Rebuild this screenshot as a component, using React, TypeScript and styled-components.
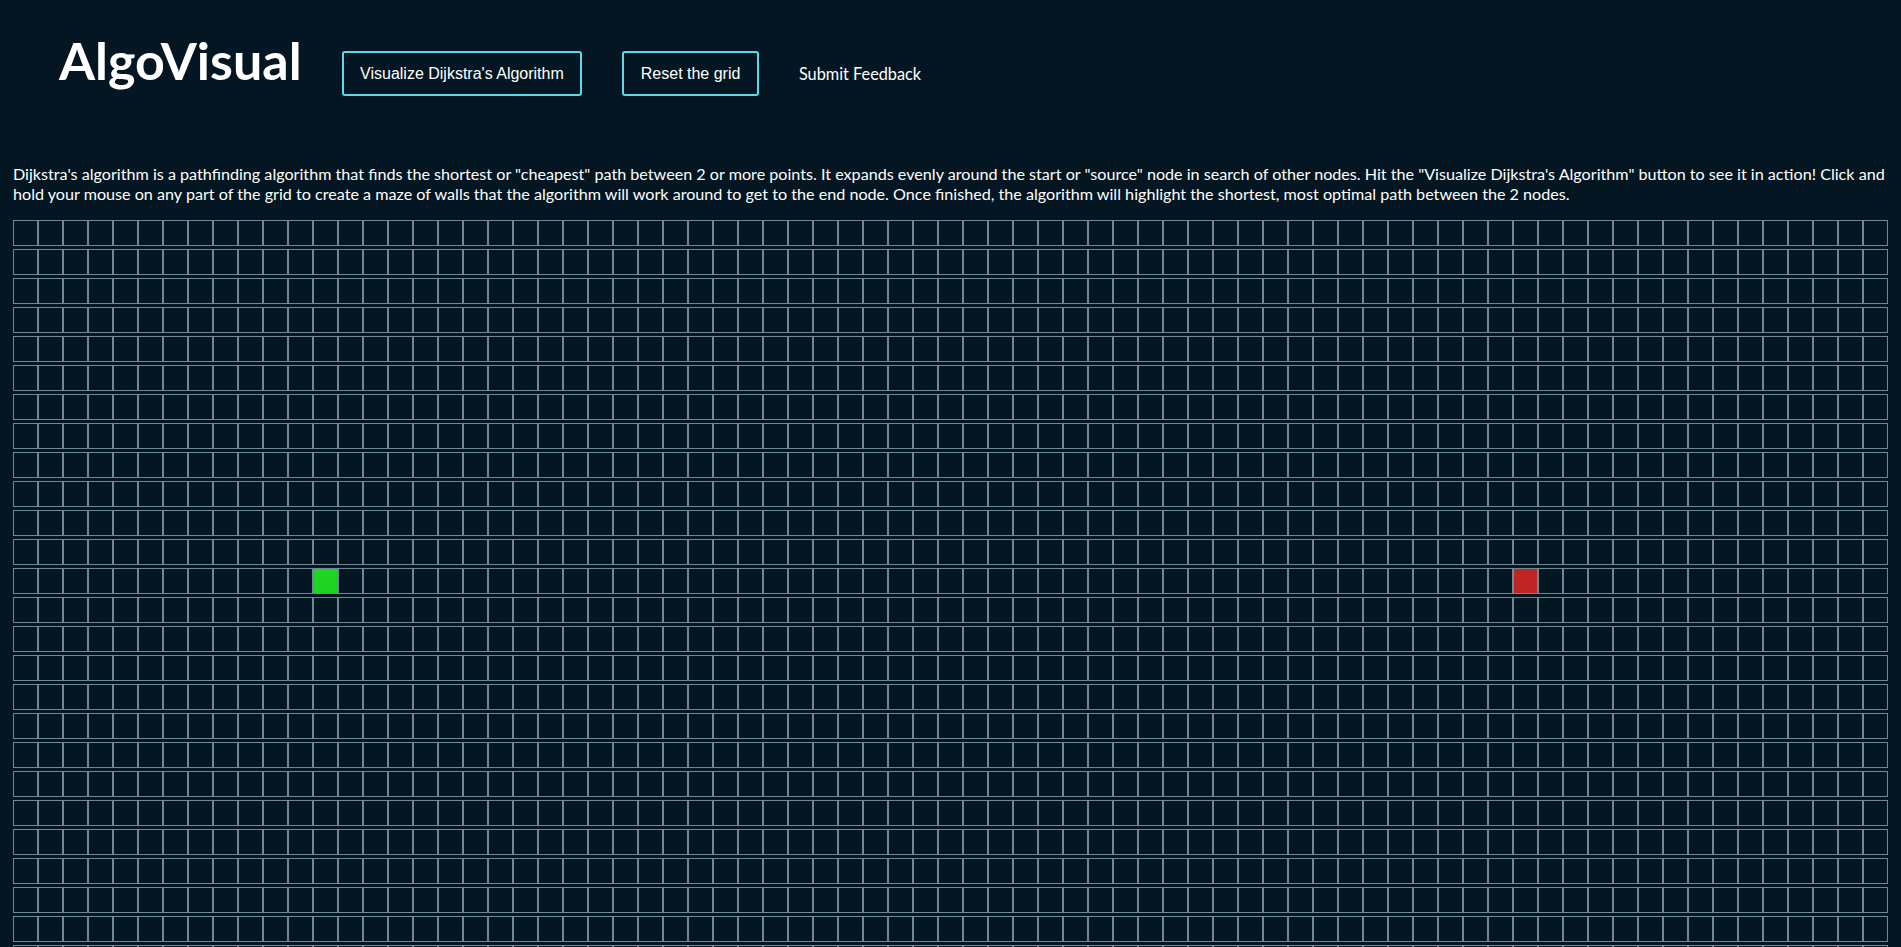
import React from "react";
import styled, { createGlobalStyle } from "styled-components";

const GlobalStyle = createGlobalStyle`
  html, body {
    margin: 0;
    padding: 0;
    background: #031621;
    overflow: hidden;
  }
  body {
    font-family: "Lato", "Open Sans", sans-serif;
    color: #ffffff;
  }
`;

const Page = styled.div`
  min-height: 947px;
  background: #031621;
`;

const Header = styled.header`
  display: flex;
  align-items: flex-start;
  padding-left: 59px;
  height: 164px;
`;

const Title = styled.h1`
  margin: 30px 0 0 0;
  font-family: "Lato", sans-serif;
  font-weight: 700;
  font-size: 52px;
  line-height: 60px;
  color: #ffffff;
`;

const Nav = styled.nav`
  display: flex;
  align-items: center;
  margin: 51px 0 0 40px;
  height: 45px;
  gap: 40px;
`;

const Button = styled.button`
  height: 45px;
  box-sizing: border-box;
  padding: 0 16.5px;
  background: transparent;
  border: 2px solid #5fd9e3;
  border-radius: 3px;
  color: #ffffff;
  font-family: "Liberation Sans", Arial, sans-serif;
  font-size: 16px;
  cursor: pointer;
`;

const Link = styled.a`
  color: #ffffff;
  font-family: "Lato", sans-serif;
  font-size: 16.3px;
  text-decoration: none;
`;

const Description = styled.p`
  margin: 0 8px 16px 13px;
  font-family: "Lato", sans-serif;
  font-size: 16.15px;
  line-height: 20px;
  color: #ffffff;
`;

const Grid = styled.div`
  display: flex;
  flex-direction: column;
  gap: 3px;
  padding-left: 13px;
`;

const Row = styled.div`
  display: flex;
`;

type Kind = "start" | "finish" | "empty";

const fills: Record<Kind, string> = {
  start: "#1fd425",
  finish: "#c12424",
  empty: "transparent",
};

const Cell = styled.div<{ $kind: Kind }>`
  width: 25px;
  height: 26px;
  box-sizing: border-box;
  border: 1px solid #6e8896;
  background: ${(p) => fills[p.$kind]};
  flex: none;
`;

const ROWS = 26;
const COLS = 75;

export default function App() {
  const rows = Array.from({ length: ROWS }, (_, r) =>
    Array.from({ length: COLS }, (_, c): Kind =>
      r === 12 && c === 12 ? "start" : r === 12 && c === 60 ? "finish" : "empty"
    )
  );
  return (
    <Page>
      <GlobalStyle />
      <Header>
        <Title>AlgoVisual</Title>
        <Nav>
          <Button>Visualize Dijkstra's Algorithm</Button>
          <Button>Reset the grid</Button>
          <Link href="#">Submit Feedback</Link>
        </Nav>
      </Header>
      <Description>
        Dijkstra's algorithm is a pathfinding algorithm that finds the shortest or "cheapest" path between 2 or more
        points. It expands evenly around the start or "source" node in search of other nodes. Hit the "Visualize
        Dijkstra's Algorithm" button to see it in action! Click and hold your mouse on any part of the grid to create a
        maze of walls that the algorithm will work around to get to the end node. Once finished, the algorithm will
        highlight the shortest, most optimal path between the 2 nodes.
      </Description>
      <Grid>
        {rows.map((row, r) => (
          <Row key={r}>
            {row.map((kind, c) => (
              <Cell key={c} $kind={kind} />
            ))}
          </Row>
        ))}
      </Grid>
    </Page>
  );
}
